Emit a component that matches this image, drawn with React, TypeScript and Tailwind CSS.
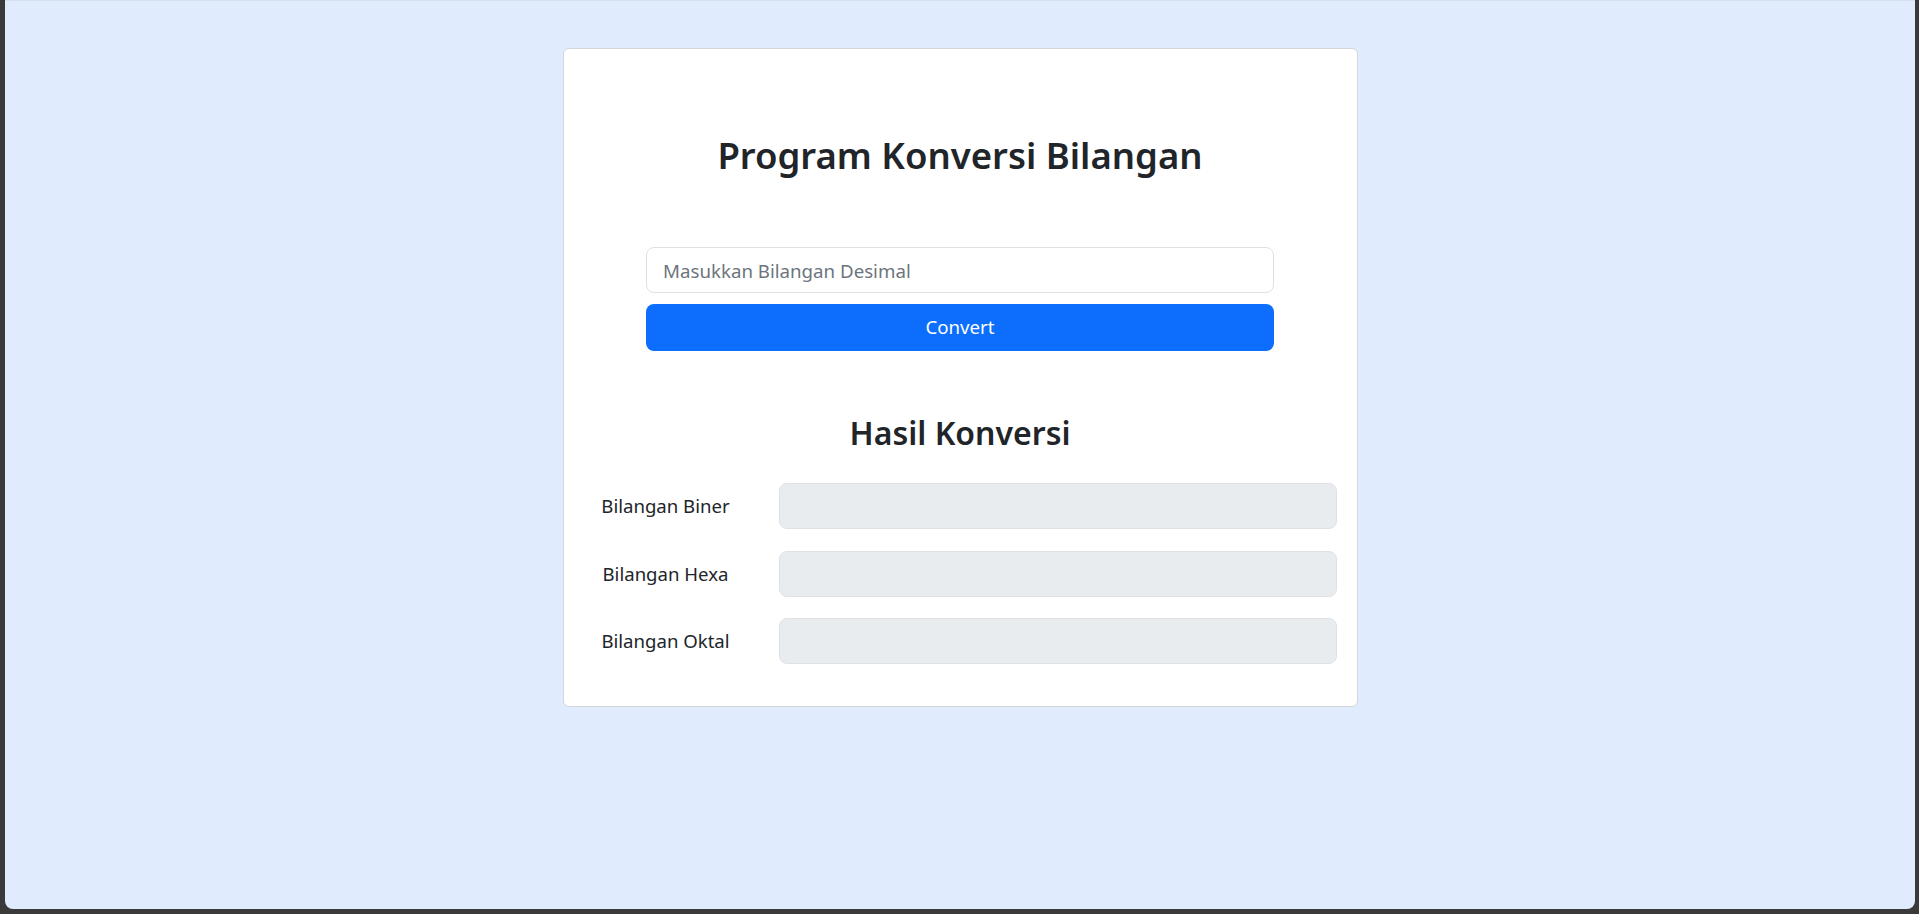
import { useState } from 'react'

const fields = ['Bilangan Biner', 'Bilangan Hexa', 'Bilangan Oktal']

const App = () => {
  const [value, setValue] = useState('')

  return (
    <div className="h-[914px] w-full bg-[#3a3a3a] flex flex-col font-['Noto_Sans',sans-serif] text-[#212529]">
      <div className="flex-1 ml-[5px] mr-[4px] mb-[5px] bg-[#e0ebfd] border-t border-[#d6dfec] rounded-b-[8px] flex justify-center">
        <div className="mt-[47px] w-[795px] h-[659px] bg-white border border-[#d3d6da] rounded-[6px] flex flex-col pt-[82px] px-[20px]">
          <h1 className="text-[36.5px] leading-[48px] font-semibold text-center">Program Konversi Bilangan</h1>

          <div className="mt-[68px] w-[628px] mx-auto flex flex-col gap-[11px]">
            <input
              type="text"
              value={value}
              onChange={(e) => setValue(e.target.value)}
              placeholder="Masukkan Bilangan Desimal"
              className="h-[46px] w-full border border-[#dee2e6] rounded-[8px] px-4 text-[18.7px] outline-none placeholder:text-[#6c757d]"
            />
            <button className="h-[47px] w-full bg-[#0d6efd] text-white text-[18.7px] rounded-[8px]">
              Convert
            </button>
          </div>

          <h2 className="mt-[63px] text-[32px] leading-[38px] font-semibold text-center">Hasil Konversi</h2>

          <div className="mt-[31px] flex flex-col gap-[21.5px]">
            {fields.map((label) => (
              <div key={label} className="flex items-center">
                <label className="w-[164px] text-center text-[18.6px]">{label}</label>
                <input
                  type="text"
                  disabled
                  className="ml-[31px] flex-1 h-[46px] bg-[#e9ecef] border border-[#dee2e6] rounded-[8px] px-4 text-[18.6px]"
                />
              </div>
            ))}
          </div>
        </div>
      </div>
    </div>
  )
}

export default App
